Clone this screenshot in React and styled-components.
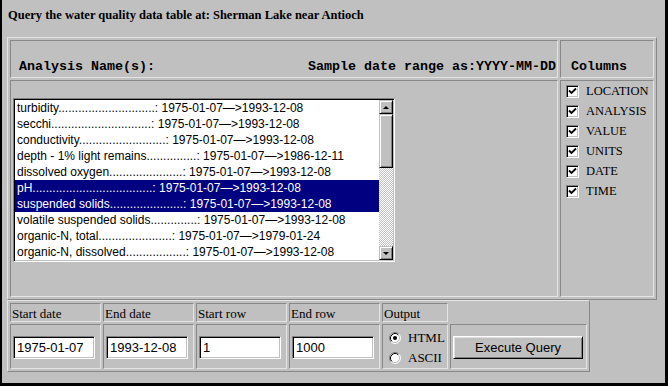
import React from 'react';
import styled, { createGlobalStyle } from 'styled-components';

const GlobalStyle = createGlobalStyle`
    body {
        margin: 0;
        background: #c0c0c0;
    }
`;

const light = '#e4e4e4';
const dark = '#888888';

const Page = styled.div`
    width: 668px;
    height: 386px;
    box-sizing: border-box;
    padding: 8px 0 0 5px;
    background: #c0c0c0;
    border-left: 2px solid #000;
    border-right: 3px solid #000;
    border-bottom: 3px solid #000;
    overflow: hidden;
`;

const Title = styled.h1`
    margin: 0 0 0 1px;
    font: bold 12.5px/15px "Liberation Serif", serif;
    color: #000;
`;

const Table = styled.div`
    display: grid;
    grid-template-columns: ${p => p.cols};
    grid-template-rows: ${p => p.rows};
    gap: 2px;
    padding: 2px;
    width: fit-content;
    border: 1px solid;
    border-color: ${light} ${dark} ${dark} ${light};
    margin-top: ${p => p.top || 0}px;
`;

const Cell = styled.div`
    box-sizing: border-box;
    border: 1px solid;
    border-color: ${dark} ${light} ${light} ${dark};
    grid-column: ${p => p.col || 'auto'};
    grid-row: ${p => p.row || 'auto'};
`;

const HeadCell = styled(Cell)`
    display: flex;
    align-items: flex-end;
    justify-content: space-between;
    padding: 0 1px 3px ${p => p.indent || 8}px;
    font: bold 13.33px "Liberation Mono", monospace;
    white-space: pre;
    line-height: 15px;
`;

const ListCell = styled(Cell)`
    padding: 17px 0 0 2px;
`;

const ListBox = styled.div`
    display: flex;
    width: 382px;
    height: 164px;
    box-sizing: border-box;
    border: 1px solid;
    border-color: #808080 #fff #fff #808080;
    box-shadow: inset 1px 1px #000, inset -1px -1px #c0c0c0;
    padding: 1px;
    background: #fff;
`;

const Options = styled.div`
    flex: 1;
    overflow: hidden;
`;

const Option = styled.div`
    height: 16px;
    padding-left: 2px;
    font: 12px/16px "Liberation Sans", Arial, sans-serif;
    white-space: pre;
    color: ${p => (p.selected ? '#fff' : '#000')};
    background: ${p => (p.selected ? '#000080' : 'transparent')};
`;

const ScrollBar = styled.div`
    display: flex;
    flex-direction: column;
    width: 14px;
`;

const Raised = styled.div`
    box-sizing: border-box;
    display: flex;
    align-items: center;
    justify-content: center;
    background: #c0c0c0;
    border: 1px solid;
    border-color: #c0c0c0 #000 #000 #c0c0c0;
    box-shadow: inset 1px 1px #fff, inset -1px -1px #808080;
`;

const ScrollButton = styled(Raised)`
    height: 14px;
`;

const Thumb = styled(Raised)`
    height: 54px;
`;

const Track = styled.div`
    flex: 1;
    background-color: #c0c0c0;
    background-image: repeating-conic-gradient(#fff 0 25%, #c0c0c0 0 50%);
    background-size: 2px 2px;
`;

const Arrow = styled.span`
    width: 0;
    height: 0;
    border-left: 3px solid transparent;
    border-right: 3px solid transparent;
    ${p => (p.down ? 'border-top: 3px solid #000;' : 'border-bottom: 3px solid #000;')}
`;

const ColumnsCell = styled(Cell)`
    padding: 0 0 0 5px;
`;

const CheckRow = styled.label`
    display: flex;
    align-items: center;
    gap: 7px;
    height: 20px;
    font: 12.5px "Liberation Serif", serif;
`;

const Box = styled.span`
    display: flex;
    align-items: center;
    justify-content: center;
    width: 13px;
    height: 13px;
    box-sizing: border-box;
    border: 1px solid;
    border-color: #808080 #fff #fff #808080;
    box-shadow: inset 1px 1px #000, inset -1px -1px #c0c0c0;
    background: #fff;
`;

const Label = styled(Cell)`
    padding: 2px 0 0 1px;
    font: 13px/15px "Liberation Serif", serif;
`;

const FieldCell = styled(Cell)`
    padding: 11px 0 0 2px;
`;

const Input = styled.div`
    width: 82px;
    height: 23px;
    box-sizing: border-box;
    border: 1px solid;
    border-color: #808080 #fff #fff #808080;
    box-shadow: inset 1px 1px #000, inset -1px -1px #c0c0c0;
    background: #fff;
    padding: 0 3px;
    font: 13px/21px "Liberation Sans", Arial, sans-serif;
`;

const OutputCell = styled(Cell)`
    padding: 3px 0 0 6px;
`;

const RadioRow = styled.label`
    display: flex;
    align-items: center;
    gap: 7px;
    height: 20px;
    font: 13px "Liberation Serif", serif;
`;

const Button = styled(Raised)`
    width: 130px;
    height: 23px;
    border-color: #fff #000 #000 #fff;
    box-shadow: inset 1px 1px #dfdfdf, inset -1px -1px #808080;
    font: 13px "Liberation Sans", Arial, sans-serif;
`;

const Check = () => (
    <Box>
        <svg width="9" height="9" viewBox="0 0 9 9">
            <path d="M1 3.5 L3.5 6 L8 1.5" fill="none" stroke="#000" strokeWidth="1.8" />
        </svg>
    </Box>
);

const Radio = ({ on }) => (
    <svg width="12" height="12" viewBox="0 0 12 12">
        <circle cx="6" cy="6" r="5" fill="#fff" />
        <path d="M2.11 9.89 A5.5 5.5 0 0 1 9.89 2.11" fill="none" stroke="#808080" />
        <path d="M9.89 2.11 A5.5 5.5 0 0 1 2.11 9.89" fill="none" stroke="#fff" />
        <path d="M2.82 9.18 A4.5 4.5 0 0 1 9.18 2.82" fill="none" stroke="#000" />
        <path d="M9.18 2.82 A4.5 4.5 0 0 1 2.82 9.18" fill="none" stroke="#c0c0c0" />
        {on && <circle cx="6" cy="6" r="2" fill="#000" />}
    </svg>
);

const analyses = [
    ['turbidity', 29, '1993-12-08'],
    ['secchi', 30, '1993-12-08'],
    ['conductivity', 26, '1993-12-08'],
    ['depth - 1% light remains', 15, '1986-12-11'],
    ['dissolved oxygen', 22, '1993-12-08'],
    ['pH', 36, '1993-12-08', true],
    ['suspended solids', 22, '1993-12-08', true],
    ['volatile suspended solids', 14, '1993-12-08'],
    ['organic-N, total', 22, '1979-01-24'],
    ['organic-N, dissolved', 18, '1993-12-08'],
];

const columns = ['LOCATION', 'ANALYSIS', 'VALUE', 'UNITS', 'DATE', 'TIME'];

const fields = [
    ['Start date', '1975-01-07'],
    ['End date', '1993-12-08'],
    ['Start row', '1'],
    ['End row', '1000'],
];

const App = () => (
    <Page>
        <GlobalStyle />
        <Title>Query the water quality data table at: Sherman Lake near Antioch</Title>
        <Table top={14} cols="548px 94px" rows="38px 217px">
            <HeadCell>
                <span>Analysis Name(s):</span>
                <span>Sample date range as:YYYY-MM-DD</span>
            </HeadCell>
            <HeadCell indent={10}>Columns</HeadCell>
            <ListCell>
                <ListBox>
                    <Options>
                        {analyses.map(([name, dots, end, sel]) => (
                            <Option key={name} selected={sel}>
                                {`${name}${'.'.repeat(dots)}: 1975-01-07\u2014>${end}`}
                            </Option>
                        ))}
                    </Options>
                    <ScrollBar>
                        <ScrollButton><Arrow /></ScrollButton>
                        <Thumb />
                        <Track />
                        <ScrollButton><Arrow down /></ScrollButton>
                    </ScrollBar>
                </ListBox>
            </ListCell>
            <ColumnsCell>
                {columns.map(c => (
                    <CheckRow key={c}>
                        <Check />
                        {c}
                    </CheckRow>
                ))}
            </ColumnsCell>
        </Table>
        <Table cols="91px 91px 91px 91px 66px 137px" rows="19px 45px">
            {fields.map(([label], i) => (
                <Label key={label} col={i + 1} row={1}>{label}</Label>
            ))}
            <Label col={5} row={1}>Output</Label>
            {fields.map(([label, value], i) => (
                <FieldCell key={label} col={i + 1} row={2}>
                    <Input>{value}</Input>
                </FieldCell>
            ))}
            <OutputCell col={5} row={2}>
                <RadioRow><Radio on />HTML</RadioRow>
                <RadioRow><Radio />ASCII</RadioRow>
            </OutputCell>
            <FieldCell col={6} row={2}>
                <Button>Execute Query</Button>
            </FieldCell>
        </Table>
    </Page>
);

export default App;
